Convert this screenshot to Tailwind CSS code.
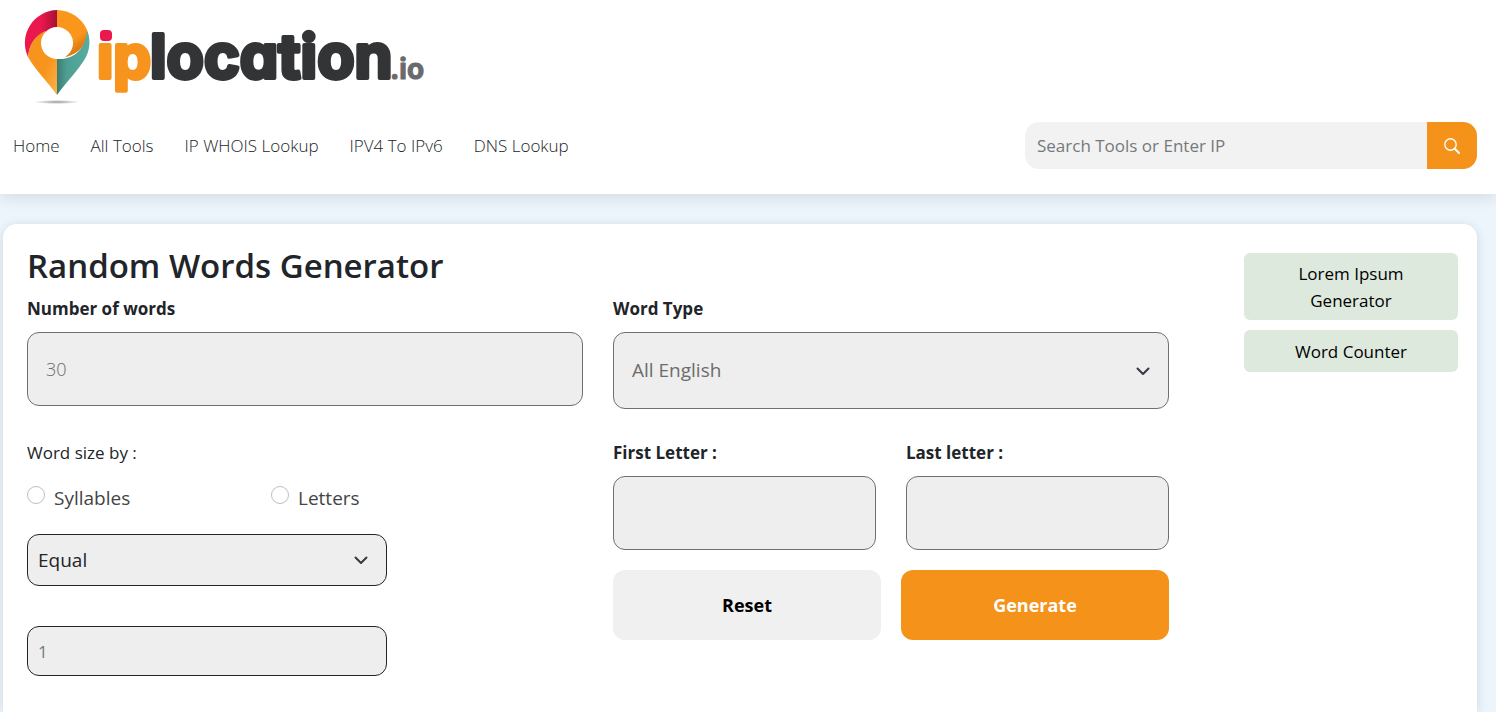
<!DOCTYPE html>
<html lang="en">
<head>
  <meta charset="UTF-8" />
  <meta name="viewport" content="width=device-width, initial-scale=1.0">
  <title>Random Words Generator</title>
  <script src="https://cdn.jsdelivr.net/npm/@tailwindcss/browser@4"></script>
</head>
<body class="bg-[#ecf4fc] min-h-screen flex flex-col font-['Open_Sans','Noto_Sans',sans-serif] text-[#212529]">

  <header class="bg-white pt-2 pb-[25px] shadow-[0_4px_14px_rgba(0,0,0,0.1)]">
    <a href="#" class="block w-fit ml-5" aria-label="iplocation.io">
      <svg width="412" height="98" viewBox="20 8 412 98">
        <defs>
          <linearGradient id="red" x1="0" x2="1"><stop offset="0.5" stop-color="#ea184e" /><stop offset="1" stop-color="#a80f33" /></linearGradient>
          <linearGradient id="amber" x1="0" x2="1" y1="0" y2="1"><stop offset="0.6" stop-color="#f7941d" /><stop offset="1" stop-color="#fcb34a" /></linearGradient>
          <linearGradient id="orange" x1="0.3" x2="0.8" y1="0" y2="1"><stop offset="0.6" stop-color="#fa961c" /><stop offset="1" stop-color="#c8640c" /></linearGradient>
          <linearGradient id="teal" x1="0" x2="1"><stop offset="0" stop-color="#3a7d70" /><stop offset="0.3" stop-color="#4f9e93" /><stop offset="1" stop-color="#58aca0" /></linearGradient>
          <radialGradient id="ground"><stop offset="0" stop-color="#999" /><stop offset="1" stop-color="#fff" /></radialGradient>
        </defs>
        <ellipse cx="57" cy="102" rx="23" ry="2" fill="url(#ground)" />
        <path d="M57 10A33 33 0 0 0 28 57C29 46 34 37 43 34L57 27Z" fill="url(#red)" />
        <path d="M28 57C29 44 35 36 45 31L57 43V95C48 82 35 70 28 57Z" fill="url(#amber)" />
        <path d="M57 10A33 33 0 0 1 87 30C88 43 80 53 66 57L57 43Z" fill="url(#orange)" />
        <path d="M87 30C90 37 91 47 86 57C79 70 66 82 57 95V59C75 60 86 48 87 30Z" fill="url(#teal)" />
        <circle cx="57" cy="43" r="16" fill="#fff" />
        <g class="font-['Inter'] font-bold [font-feature-settings:'cv11']" stroke-linejoin="round" stroke-width="4">
          <text x="97" y="78" font-size="60" fill="#f7941d" stroke="#f7941d">ip</text>
          <rect x="97" y="24" width="18" height="19" fill="#fff" />
          <rect x="100" y="30" width="12" height="11" rx="4" fill="#ea184e" />
          <text x="150" y="78" font-size="61" fill="#333436" stroke="#333436">location</text>
          <text x="390" y="79" font-size="28" fill="#6a6a6c" stroke="#6a6a6c" stroke-width="1">.io</text>
        </g>
      </svg>
    </a>

    <div class="mt-4 flex items-center justify-between pl-[13px] pr-[19px]">
      <nav class="flex gap-[31px] text-[17px] font-light text-[#212529]">
        <a href="#">Home</a>
        <a href="#">All Tools</a>
        <a href="#">IP WHOIS Lookup</a>
        <a href="#">IPV4 To IPv6</a>
        <a href="#">DNS Lookup</a>
      </nav>
      <form class="flex h-[47px] w-[452px]">
        <input type="text" aria-label="Search tools" placeholder="Search Tools or Enter IP" class="min-w-0 flex-1 rounded-l-[14px] bg-[#f2f2f2] px-3 text-[17px] placeholder:text-[#75797d] focus:outline-none">
        <button type="button" aria-label="Search" class="flex w-[50px] items-center justify-center rounded-r-[14px] bg-[#f59219] text-white">
          <svg width="16" height="16" viewBox="0 0 16 16" fill="none" stroke="currentColor">
            <circle cx="6.5" cy="6.5" r="5.7" stroke-width="1.4" />
            <path d="M10.8 10.8L15 15" stroke-width="2" stroke-linecap="round" />
          </svg>
        </button>
      </form>
    </div>
  </header>

  <main class="mt-[30px] ml-[3px] mr-[19px] flex flex-1 items-start gap-[75px] rounded-t-[14px] bg-white pt-5 pb-9 pl-6 pr-[19px] shadow-[0_2px_12px_rgba(0,0,0,0.12)]">
    <form class="flex-1">
      <h1 class="mb-2 text-[33px] leading-[44px] font-semibold">Random Words Generator</h1>

      <div class="grid grid-cols-2 gap-x-[30px] gap-y-[31px]">
        <div>
          <label for="count" class="mb-[10px] block text-[17px] leading-[26px] font-bold">Number of words</label>
          <input id="count" type="text" placeholder="30" class="h-[74px] w-full rounded-xl border border-[#6f6f6f] bg-[#eee] px-[18px] text-lg font-light placeholder:text-[#6c6c6c]">
        </div>

        <div>
          <label for="type" class="mb-[10px] block text-[17px] leading-[26px] font-bold">Word Type</label>
          <div class="relative">
            <select id="type" class="h-[77px] w-full appearance-none rounded-xl border border-[#6f6f6f] bg-[#eee] px-[18px] text-[19px] text-[#6c6c6c]">
              <option>All English</option>
            </select>
            <svg class="pointer-events-none absolute top-1/2 right-[18px] -translate-y-1/2" width="16" height="16" viewBox="0 0 16 16" fill="none" stroke="#343a40" stroke-width="2" stroke-linecap="round" stroke-linejoin="round"><path d="M2.5 5.5L8 11l5.500-5.500" /></svg>
          </div>
        </div>

        <fieldset class="w-[360px]">
          <legend class="text-[17px] leading-[26px]">Word size by :</legend>
          <div class="mt-[18px] flex text-[19px] leading-7 text-[#444]">
            <label class="flex w-[244px] gap-[9px]"><input type="radio" name="size" class="mt-[2px] size-[18px] appearance-none rounded-full border border-[#bfbfbf] bg-white checked:border-[5px] checked:border-[#f59219]">Syllables</label>
            <label class="flex gap-[9px]"><input type="radio" name="size" class="mt-[2px] size-[18px] appearance-none rounded-full border border-[#bfbfbf] bg-white checked:border-[5px] checked:border-[#f59219]">Letters</label>
          </div>
          <div class="relative mt-[22px]">
            <select aria-label="Comparison" class="h-[52px] w-full appearance-none rounded-xl border border-[#212529] bg-[#eee] px-[10px] text-[19px]">
              <option>Equal</option>
            </select>
            <svg class="pointer-events-none absolute top-1/2 right-[18px] -translate-y-1/2" width="16" height="16" viewBox="0 0 16 16" fill="none" stroke="#343a40" stroke-width="2" stroke-linecap="round" stroke-linejoin="round"><path d="M2.5 5.5L8 11l5.500-5.500" /></svg>
          </div>
          <input type="text" aria-label="Size" placeholder="1" class="mt-10 h-[50px] w-full rounded-xl border border-[#212529] bg-[#eee] px-[10px] text-[17px] placeholder:text-[#75797d]">
        </fieldset>

        <div>
          <div class="grid grid-cols-2 gap-[30px]">
            <div>
              <label for="first" class="mb-[10px] block text-[17px] leading-[26px] font-bold">First Letter :</label>
              <input id="first" type="text" class="h-[74px] w-full rounded-xl border border-[#6f6f6f] bg-[#eee] px-[18px] text-lg">
            </div>
            <div>
              <label for="last" class="mb-[10px] block text-[17px] leading-[26px] font-bold">Last letter :</label>
              <input id="last" type="text" class="h-[74px] w-full rounded-xl border border-[#6f6f6f] bg-[#eee] px-[18px] text-lg">
            </div>
          </div>
          <div class="mt-5 grid grid-cols-2 gap-5 text-lg font-bold">
            <button type="reset" class="h-[70px] rounded-xl bg-[#f0f0f0] text-black">Reset</button>
            <button type="button" class="h-[70px] rounded-xl bg-[#f59219] text-white">Generate</button>
          </div>
        </div>
      </div>
    </form>

    <aside class="mt-[9px] flex w-[214px] flex-col gap-[10px] text-center text-[17px] leading-[27px] text-black">
      <a href="#" class="rounded-md bg-[#dee9de] px-10 pt-[7px] pb-[6px]">Lorem Ipsum Generator</a>
      <a href="#" class="rounded-md bg-[#dee9de] px-10 pt-[8px] pb-[7px]">Word Counter</a>
    </aside>
  </main>

</body>
</html>
